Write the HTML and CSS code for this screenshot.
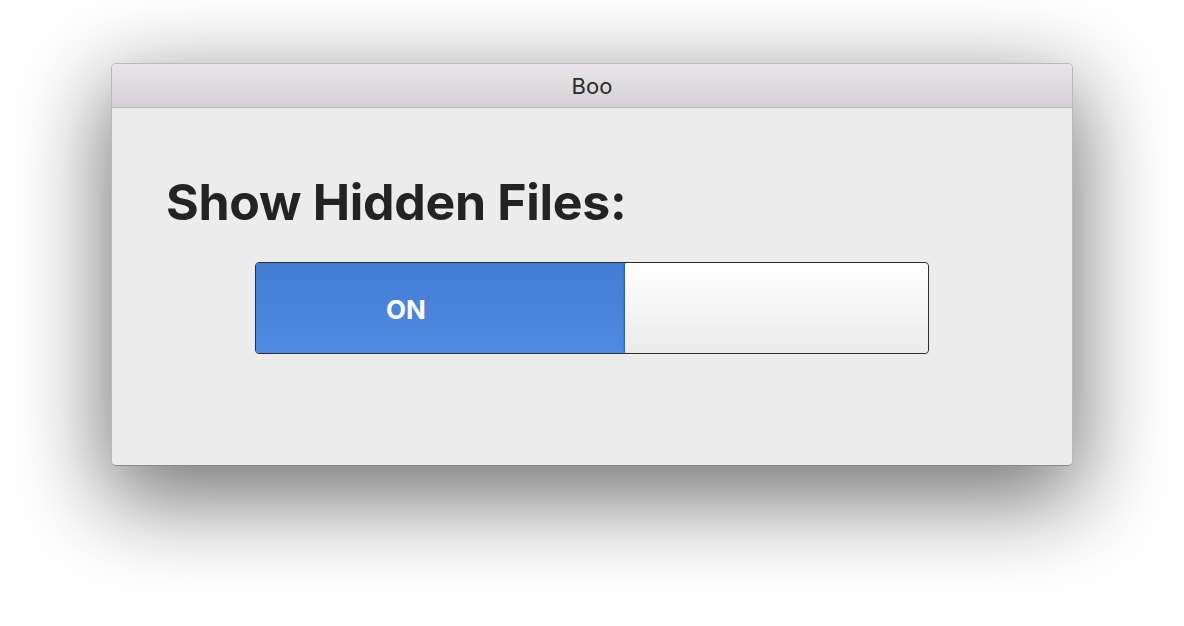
FILE: index.html
```html
<!DOCTYPE html>
<html>
<head>
<meta charset="utf-8">
<title>Boo</title>
<link rel="stylesheet" href="styles.css">
</head>
<body>
<div class="window">
  <div class="titlebar">Boo</div>
  <div class="content">
    <h1 class="heading">Show Hidden Files:</h1>
    <div class="toggle">
      <div class="toggle-on"><span class="on-label">ON</span></div>
      <div class="knob"></div>
    </div>
  </div>
</div>
</body>
</html>
```

FILE: styles.css
```css
html, body {
  margin: 0;
  padding: 0;
  background: #ffffff;
}
html {
  height: 100%;
}
body {
  min-height: 626px;
  box-sizing: border-box;
  padding: 63px 0 0 111px;
  font-family: Inter, "Liberation Sans", sans-serif;
}
.window {
  width: 962px;
  height: 403px;
  box-sizing: border-box;
  border-radius: 5px;
  background: #ececec;
  border: 1px solid #b9b9b9;
  border-bottom-color: #8a8a8a;
  box-shadow: 0 28px 90px 6px rgba(0, 0, 0, 0.55);
  overflow: hidden;
  display: flex;
  flex-direction: column;
}
.titlebar {
  height: 43px;
  flex: none;
  background: linear-gradient(#e8e6e8, #d3d1d3);
  border-bottom: 1px solid #b1b1b1;
  display: flex;
  align-items: center;
  justify-content: center;
  font-size: 22px;
  color: #2b2b2b;
}
.content {
  padding: 0 0 0 54px;
}
.heading {
  margin: 64px 0 0 0;
  font-size: 50px;
  line-height: 60px;
  font-weight: 700;
  letter-spacing: -0.3px;
  color: #232323;
}
.toggle {
  margin: 30px 0 0 89px;
  width: 674px;
  height: 92px;
  box-sizing: border-box;
  border: 1px solid #2c2c2c;
  border-radius: 4px;
  overflow: hidden;
  display: flex;
}
.toggle-on {
  width: 369px;
  flex: none;
  background: linear-gradient(#437dd3, #518ae1);
  display: flex;
  align-items: center;
  padding: 3px 0 0 130px;
  box-sizing: border-box;
}
.on-label {
  color: #ffffff;
  font-size: 26px;
  font-weight: 700;
}
.knob {
  flex: 1;
  background: linear-gradient(#ffffff, #ebebeb);
  border-radius: 4px;
  box-shadow: -1px 0 2px rgba(0, 0, 0, 0.35);
}
```
